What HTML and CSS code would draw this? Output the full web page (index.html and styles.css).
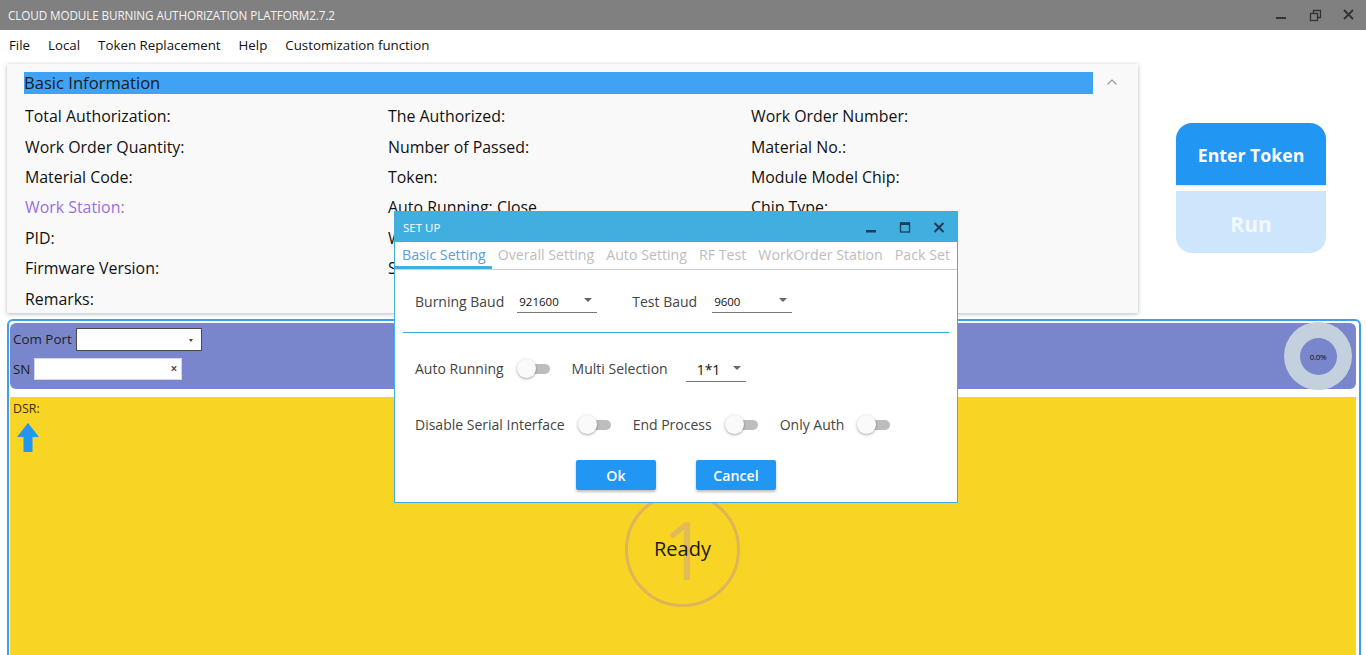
FILE: index.html
```html
<!DOCTYPE html>
<html lang="en">
<head>
    <meta charset="UTF-8">
    <meta name="viewport" content="width=device-width, initial-scale=1.0">
    <title>Cloud Module Burning Authorization Platform</title>
    <link rel="stylesheet" href="styles.css">
</head>
<body>
    <div class="titlebar">
        <span class="app-title">CLOUD MODULE BURNING AUTHORIZATION PLATFORM2.7.2</span>
        <div class="win-controls">
            <svg width="34" height="30" viewBox="0 0 34 30"><rect x="12" y="17" width="10" height="2" fill="#333"/></svg>
            <svg width="34" height="30" viewBox="0 0 34 30"><rect x="12.5" y="13.5" width="7" height="7" fill="none" stroke="#333" stroke-width="1.3"/><path d="M15.5 13.5 V10.5 H22.5 V17.5 H19.5" fill="none" stroke="#333" stroke-width="1.3"/></svg>
            <svg width="34" height="30" viewBox="0 0 34 30"><path d="M12 10 L21 19 M21 10 L12 19" stroke="#333" stroke-width="1.8"/></svg>
        </div>
    </div>

    <nav class="menubar">
        <span>File</span>
        <span>Local</span>
        <span>Token Replacement</span>
        <span>Help</span>
        <span>Customization function</span>
    </nav>

    <div class="top">
        <section class="info-card">
            <div class="info-head">
                <div class="info-title">Basic Information</div>
                <svg class="chevron" width="12" height="8" viewBox="0 0 12 8"><path d="M1.5 6.5 L6 2 L10.5 6.5" fill="none" stroke="#9a9a9a" stroke-width="1.2"/></svg>
            </div>
            <div class="info-grid">
                <div>Total Authorization:</div>
                <div>The Authorized:</div>
                <div>Work Order Number:</div>
                <div>Work Order Quantity:</div>
                <div>Number of Passed:</div>
                <div>Material No.:</div>
                <div>Material Code:</div>
                <div>Token:</div>
                <div>Module Model Chip:</div>
                <div class="station-label">Work Station:</div>
                <div>Auto Running: Close</div>
                <div>Chip Type:</div>
                <div>PID:</div>
                <div>Write Mode:</div>
                <div>Flash Size:</div>
                <div>Firmware Version:</div>
                <div>Serial Number:</div>
                <div>Burn Address:</div>
                <div>Remarks:</div>
                <div></div>
                <div></div>
            </div>
        </section>

        <div class="token-box">
            <button class="btn-token">Enter Token</button>
            <button class="btn-run">Run</button>
        </div>
    </div>

    <div class="work-area">
        <div class="port-panel">
            <div class="port-fields">
                <div class="field-row">
                    <label>Com Port</label>
                    <div class="combo"><span class="combo-caret"></span></div>
                </div>
                <div class="field-row">
                    <label>SN</label>
                    <div class="sn-input"><span class="sn-clear">×</span></div>
                </div>
            </div>
            <div class="gauge">
                <div class="gauge-hole">0.0%</div>
            </div>
        </div>

        <div class="station">
            <div class="dsr">DSR:</div>
            <svg class="dsr-arrow" width="22" height="29" viewBox="0 0 22 29">
                <path d="M11 0 L22 14 L15.5 14 L15.5 29 L6.5 29 L6.5 14 L0 14 Z" fill="#2196f3"/>
            </svg>
            <div class="ready-ring">
                <span class="ready-num">1</span>
                <span class="ready-text">Ready</span>
            </div>
        </div>
    </div>

    <!-- settings dialog floating over the main window -->
    <div class="dialog">
        <div class="dialog-head">
            <span class="dialog-title">SET UP</span>
            <div class="dialog-controls">
                <svg width="34" height="30" viewBox="0 0 34 30"><rect x="12" y="18" width="10" height="2.5" fill="#1f3b52"/></svg>
                <svg width="34" height="30" viewBox="0 0 34 30"><rect x="12.5" y="11" width="9" height="9" fill="none" stroke="#1f3b52" stroke-width="1.3"/><rect x="12" y="10.5" width="10" height="2.5" fill="#1f3b52"/></svg>
                <svg width="34" height="30" viewBox="0 0 34 30"><path d="M12.5 11 L21.5 20 M21.5 11 L12.5 20" stroke="#1f3b52" stroke-width="2"/></svg>
            </div>
        </div>

        <div class="tabs">
            <span class="tab active">Basic Setting</span>
            <span class="tab">Overall Setting</span>
            <span class="tab">Auto Setting</span>
            <span class="tab">RF Test</span>
            <span class="tab">WorkOrder Station</span>
            <span class="tab">Pack Set</span>
        </div>

        <div class="dialog-body">
            <div class="set-row baud-row">
                <span class="set-label">Burning Baud</span>
                <div class="select baud-select"><span>921600</span><i class="caret"></i></div>
                <span class="set-label test-baud">Test Baud</span>
                <div class="select baud-select"><span>9600</span><i class="caret"></i></div>
            </div>

            <div class="divider"></div>

            <div class="set-row">
                <span class="set-label">Auto Running</span>
                <span class="toggle"></span>
                <span class="set-label">Multi Selection</span>
                <div class="select multi-select"><span>1*1</span><i class="caret"></i></div>
            </div>

            <div class="set-row">
                <span class="set-label">Disable Serial Interface</span>
                <span class="toggle"></span>
                <span class="set-label">End Process</span>
                <span class="toggle"></span>
                <span class="set-label">Only Auth</span>
                <span class="toggle"></span>
            </div>

            <div class="dialog-actions">
                <button class="btn-dialog">Ok</button>
                <button class="btn-dialog">Cancel</button>
            </div>
        </div>
    </div>
</body>
</html>
```

FILE: styles.css
```css
* {
    margin: 0;
    padding: 0;
    box-sizing: border-box;
}

body {
    font-family: 'Open Sans', 'Noto Sans', sans-serif;
    background: #fff;
    color: #111;
    width: 1366px;
    height: 655px;
    overflow: hidden;
    position: relative;
}

/* window chrome */
.titlebar {
    height: 30px;
    background: #808080;
    display: flex;
    align-items: center;
    justify-content: space-between;
    padding-left: 8px;
}

.app-title {
    color: #f4f4f4;
    font-size: 11.7px;
    letter-spacing: -0.1px;
}

.win-controls {
    display: flex;
}

.menubar {
    height: 30px;
    display: flex;
    align-items: center;
    padding-left: 9px;
    gap: 18px;
    font-size: 13.3px;
    color: #111;
}

/* top area */
.top {
    display: flex;
    align-items: flex-start;
}

.info-card {
    margin: 4px 0 0 7px;
    width: 1131px;
    height: 249px;
    background: #f9f9f9;
    box-shadow: 0 1px 4px rgba(0, 0, 0, 0.28);
    padding: 8px 0 0 17px;
}

.info-head {
    display: flex;
    align-items: center;
}

.info-title {
    width: 1069px;
    height: 22px;
    background: #3fa3f5;
    color: #1b1b1b;
    font-size: 16.6px;
    line-height: 22px;
}

.chevron {
    margin-left: 13px;
    margin-top: -2px;
}

.info-grid {
    display: grid;
    grid-template-columns: 363px 363px 363px;
    grid-auto-rows: 30.4px;
    margin-top: 7px;
    padding-left: 1px;
    font-size: 15.9px;
    align-items: center;
}

.station-label {
    color: #9b6fe0;
}

.token-box {
    margin: 63px 0 0 38px;
    width: 150px;
    display: flex;
    flex-direction: column;
    gap: 6px;
}

.token-box button {
    border: none;
    height: 62px;
    font-family: inherit;
    font-weight: 700;
    color: #fff;
}

.btn-token {
    background: #2196f3;
    border-radius: 16px 16px 0 0;
    font-size: 17.7px;
    padding-top: 2px;
    box-shadow: 0 1px 2px rgba(0, 0, 0, 0.15);
}

.btn-run {
    background: #cde6fb;
    border-radius: 0 0 16px 16px;
    font-size: 21px;
    padding-top: 3px;
    color: #f1f8fe !important;
}

/* station area */
.work-area {
    margin: 6px 5px 0 7px;
    border: 2px solid #3d9ff2;
    border-radius: 6px;
    padding: 2px 3px 0 1px;
    height: 360px;
}

.port-panel {
    background: #7986cb;
    border-radius: 6px;
    height: 66px;
    display: flex;
    justify-content: space-between;
    align-items: center;
    padding: 0 4px 0 3px;
}

.port-fields {
    display: flex;
    flex-direction: column;
    gap: 7px;
    margin-top: -5px;
}

.field-row {
    display: flex;
    align-items: center;
    gap: 4px;
    font-size: 13.4px;
    color: #1e1e1e;
}

.combo {
    width: 126px;
    height: 23px;
    background: #fff;
    border: 1px solid #4a4a4a;
    position: relative;
}

.combo-caret {
    position: absolute;
    right: 8px;
    top: 10px;
    border-left: 2.5px solid transparent;
    border-right: 2.5px solid transparent;
    border-top: 3px solid #444;
}

.sn-input {
    width: 148px;
    height: 22px;
    background: #fff;
    border: 1px solid #d6d6e6;
    display: flex;
    align-items: center;
    justify-content: flex-end;
    padding-right: 4px;
}

.sn-clear {
    font-size: 12px;
    color: #555;
    font-weight: 700;
}

.gauge {
    width: 68px;
    height: 68px;
    border-radius: 50%;
    background: #c3d1de;
    display: flex;
    align-items: center;
    justify-content: center;
}

.gauge-hole {
    width: 37px;
    height: 37px;
    border-radius: 50%;
    background: #7986cb;
    font-size: 8px;
    color: #111;
    display: flex;
    align-items: center;
    justify-content: center;
    letter-spacing: -0.3px;
}

.station {
    margin-top: 8px;
    background: #f8d524;
    height: 290px;
    padding: 3px 0 0 3px;
}

.dsr {
    font-size: 12.4px;
    color: #3b3000;
    line-height: 18px;
}

.dsr-arrow {
    display: block;
    margin: 5px 0 0 4px;
}

.ready-ring {
    width: 115px;
    height: 115px;
    border: 3px solid #dcb657;
    border-radius: 50%;
    margin: 40px auto 0;
    position: relative;
    display: flex;
    align-items: center;
    justify-content: center;
    left: -2px;
}

.ready-num {
    position: absolute;
    font-size: 80px;
    line-height: 1;
    color: #e0bb58;
    top: 14px;
    left: 34px;
}

.ready-text {
    position: relative;
    font-size: 20px;
    color: #1a1a1a;
    top: -1px;
}

/* setup dialog */
.dialog {
    position: absolute;
    left: 394px;
    top: 211px;
    width: 564px;
    height: 292px;
    background: #fff;
    border: 1px solid #41aee0;
}

.dialog-head {
    height: 30px;
    background: #41aee0;
    display: flex;
    align-items: center;
    justify-content: space-between;
    padding-left: 8px;
}

.dialog-title {
    color: #fff;
    font-size: 11.5px;
}

.dialog-controls {
    display: flex;
    margin-right: 1px;
}

.tabs {
    display: flex;
    height: 28px;
    border-bottom: 1px solid #cfcfcf;
    font-size: 14.2px;
}

.tab {
    padding: 0 6px;
    color: #bdbdbd;
    line-height: 25px;
    border-bottom: 3px solid transparent;
}

.tab.active {
    color: #5b9be0;
    border-bottom-color: #41aee0;
    padding-left: 7px;
    padding-right: 6px;
}

.dialog-body {
    padding: 0 8px;
    font-size: 14px;
    color: #444;
}

.set-row {
    display: flex;
    align-items: center;
    padding-left: 12px;
    height: 56px;
}

.baud-row {
    height: 62px;
}

.set-label + .toggle,
.set-label + .select {
    margin-left: 13px;
}

.toggle + .set-label,
.select + .set-label {
    margin-left: 22px;
}

.select + .test-baud {
    margin-left: 35px;
}

.test-baud + .select {
    margin-left: 15px;
}

.select {
    height: 22px;
    border-bottom: 1px solid #777;
    display: flex;
    align-items: center;
    justify-content: space-between;
    padding: 0 5px 0 2px;
    color: #111;
    margin-top: 2px;
}

.baud-select {
    width: 80px;
    font-size: 11.5px;
}

.set-label + .multi-select {
    margin-left: 18px;
}

.multi-select {
    width: 60px;
    font-size: 14px;
    padding-left: 11px;
    margin-top: 4px;
    height: 24px;
}

.caret {
    border-left: 4px solid transparent;
    border-right: 4px solid transparent;
    border-top: 4px solid #666;
    margin-top: -4px;
}

.divider {
    height: 1px;
    background: #41aee0;
    margin-bottom: 7px;
}

.toggle {
    width: 33px;
    height: 19px;
    position: relative;
    display: inline-block;
}

.toggle::before {
    content: '';
    position: absolute;
    left: 6px;
    right: 0;
    top: 5px;
    height: 10px;
    border-radius: 5px;
    background: #bdbdbd;
}

.toggle::after {
    content: '';
    position: absolute;
    left: 0;
    top: 0;
    width: 19px;
    height: 19px;
    border-radius: 50%;
    background: #fafafa;
    box-shadow: 0 1px 3px rgba(0, 0, 0, 0.35);
}

.dialog-actions {
    display: flex;
    justify-content: center;
    gap: 40px;
    margin-top: 8px;
}

.btn-dialog {
    width: 80px;
    height: 30px;
    border: none;
    border-radius: 2px;
    background: #2196f3;
    color: #fff;
    font-family: inherit;
    font-size: 14.2px;
    font-weight: 600;
    box-shadow: 0 2px 3px rgba(0, 0, 0, 0.25);
}
```
